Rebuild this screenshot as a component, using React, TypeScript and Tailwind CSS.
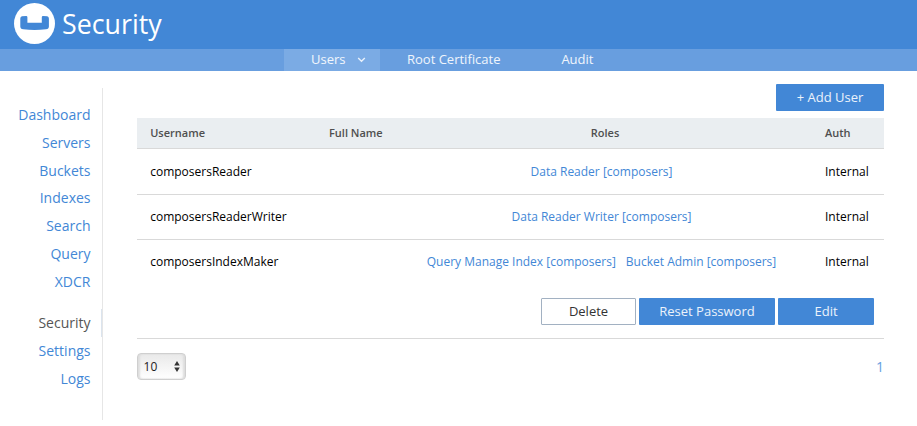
import React from "react";

const primaryLinks = ["Dashboard", "Servers", "Buckets", "Indexes", "Search", "Query", "XDCR"];
const adminLinks = ["Security", "Settings", "Logs"];

const users = [
  { name: "composersReader", roles: ["Data Reader [composers]"], auth: "Internal" },
  { name: "composersReaderWriter", roles: ["Data Reader Writer [composers]"], auth: "Internal" },
  {
    name: "composersIndexMaker",
    roles: ["Query Manage Index [composers]", "Bucket Admin [composers]"],
    auth: "Internal",
  },
];

function Logo() {
  return (
    <svg className="block h-[41px] w-[41px]" viewBox="0 0 41 41">
      <circle cx="20.5" cy="20.5" r="20.5" fill="#fff" />
      <path
        d="M6.3 15.5 Q6.3 13.7 8 13.3 L12.2 13 Q13.4 13 13.4 14.2 V19.7 H27.8 V14.2 Q27.8 13 29 13 L33.2 13.3 Q34.9 13.7 34.9 15.5 V23.4 Q34.9 25.8 32 26.2 Q20.5 27.8 9.2 26.2 Q6.3 25.8 6.3 23.4 Z"
        fill="#4287d6"
      />
    </svg>
  );
}

function SideLink({ label }: { label: string }) {
  const active = label === "Security";
  return (
    <a
      className={
        active
          ? "flex h-[28px] items-center justify-end border-r border-[#dbe4ee] pr-[10.5px] text-[#555]"
          : "flex h-[27.8px] items-center justify-end pr-[11.5px] text-[#4287d6]"
      }
    >
      {label}
    </a>
  );
}

function UserRow({ user }: { user: (typeof users)[number] }) {
  return (
    <div className="flex h-[43px] items-center text-[12px]">
      <div className="w-[274px] pl-[13.2px] text-black">{user.name}</div>
      <div className="flex w-[382px] justify-center gap-[10px] pr-px text-[#4287d6]">
        {user.roles.map((role) => (
          <span key={role} className="whitespace-nowrap">{role}</span>
        ))}
      </div>
      <div className="pl-[32px] text-black">{user.auth}</div>
    </div>
  );
}

export default function App() {
  return (
    <div className="h-[426px] w-[917px] overflow-hidden bg-white font-['Open_Sans',sans-serif] leading-none">
      <header className="flex h-[49px] items-center bg-[#4287d6] pb-[2px] pl-[14px]">
        <Logo />
        <h1 className="pt-[2px] pl-[7px] text-[26.8px] text-white">Security</h1>
      </header>
      <nav className="flex h-[22px] bg-[#689edf] pl-[284px] text-[13px] text-white/90">
        <a className="flex w-[96px] items-center bg-[#7babe4] pb-[2px] pl-[27px]">
          Users
          <svg className="mt-[2px] ml-[12px] h-[6px] w-[9px]" viewBox="0 0 9 6" fill="none" stroke="#e9f1fb" strokeWidth="1.4">
            <path d="M1.2 1 L4.5 4.3 L7.8 1" />
          </svg>
        </a>
        <a className="flex w-[154px] items-center pb-[2px] pl-[27px]">Root Certificate</a>
        <a className="flex items-center pb-[2px] pl-[27.4px]">Audit</a>
      </nav>
      <div className="flex">
        <aside className="mt-[17px] h-[332px] w-[103px] border-r border-[#e6e6e6] pt-[13.2px] text-[14px]">
          {primaryLinks.map((l) => (
            <SideLink key={l} label={l} />
          ))}
          <div className="h-[13.2px]" />
          {adminLinks.map((l) => (
            <SideLink key={l} label={l} />
          ))}
        </aside>
        <main className="ml-[34px] w-[747px] pt-[13px]">
          <div className="flex justify-end">
            <button className="h-[27px] w-[108px] rounded-[1px] bg-[#4287d6] text-[13px] text-white/90">+ Add User</button>
          </div>
          <div className="mt-[7px] flex h-[31px] items-center border-b border-[#d9d9d9] bg-[#eaeef1] pb-[2px] text-[11px] font-semibold text-[#4f4f4f]">
            <div className="w-[192px] pl-[13.2px]">Username</div>
            <div className="w-[82px]">Full Name</div>
            <div className="w-[382px] pr-[2px] pl-[8px] text-center">Roles</div>
            <div className="pl-[32px]">Auth</div>
          </div>
          <div className="h-[46px] border-b border-[#d9d9d9] pt-px">
            <UserRow user={users[0]} />
          </div>
          <div className="h-[45px] border-b border-[#d9d9d9]">
            <UserRow user={users[1]} />
          </div>
          <div className="h-[99px] border-b border-[#d9d9d9]">
            <UserRow user={users[2]} />
            <div className="mt-[15px] flex justify-end gap-[3px] pr-[10px] text-[13px] text-white/90">
              <button className="h-[27px] w-[95px] rounded-[1px] border border-[#a2b1c2] bg-white text-[#333]">Delete</button>
              <button className="h-[27px] w-[136px] rounded-[1px] bg-[#4287d6]">Reset Password</button>
              <button className="h-[27px] w-[96px] rounded-[1px] bg-[#4287d6]">Edit</button>
            </div>
          </div>
          <div className="mt-[14px] flex items-center justify-between">
            <button className="flex h-[27px] w-[49px] items-center justify-between rounded-[4px] border border-[#cfcfcf] bg-linear-to-b from-[#e9e9e9] to-white pr-[5px] pl-[5.6px] text-[12px] text-[#222] shadow-[inset_2px_0_2px_#ddd,inset_-2px_0_2px_#ddd]">
              10
              <svg className="h-[11px] w-[6px]" viewBox="0 0 6 11" fill="#333">
                <path d="M0.2 4.6 L3 0 L5.8 4.6 Z M0.2 6.4 L3 11 L5.8 6.4 Z" />
              </svg>
            </button>
            <span className="text-[14px] text-[#689edf]">1</span>
          </div>
        </main>
      </div>
    </div>
  );
}
